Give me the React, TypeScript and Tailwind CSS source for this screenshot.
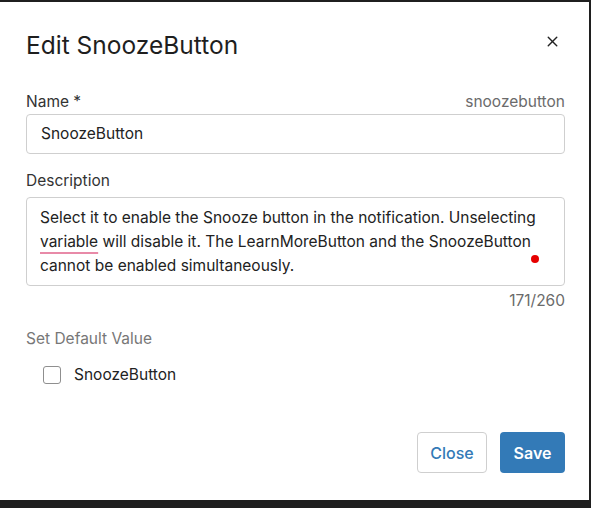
import { X } from "lucide-react";

const font = { fontFamily: "Inter, 'Noto Sans', sans-serif" };

export default function App() {
  return (
    <div className="h-[508px] w-[591px] overflow-hidden bg-[#1f1f1f] pt-[2px]" style={font}>
      <div className="flex h-[498px] w-[589px] flex-col bg-white pl-[26px] pr-[24px] text-[#222]">
        <div className="flex items-start justify-between pt-[28px]">
          <h1 className="text-[24.5px] leading-[30px] text-[#1e1e1e]">Edit SnoozeButton</h1>
          <button type="button" className="mr-[4px] mt-[3px] text-[#222]">
            <X size={17} strokeWidth={2} />
          </button>
        </div>

        <div className="mt-[32px] flex items-center justify-between text-[15.5px] leading-[20px]">
          <span className="text-[#333]">Name *</span>
          <span className="text-[#6b6b6b]">snoozebutton</span>
        </div>
        <div className="mt-[2px] flex h-[40px] items-center rounded-[4px] border border-[#cfcfcf] px-[14px] text-[15.5px] text-[#222]">
          SnoozeButton
        </div>

        <div className="mt-[17px] text-[15.5px] leading-[20px] text-[#333]">Description</div>
        <div className="relative mt-[6px] h-[89px] rounded-[4px] border border-[#cfcfcf] px-[13px] pt-[8px] text-[15.5px] leading-[24px] text-[#222]">
          Select it to enable the Snooze button in the notification. Unselecting
          <br />
          <span className="underline decoration-[#e88aa8] decoration-2 underline-offset-[5px]">variable</span> will disable it. The
          LearnMoreButton and the SnoozeButton
          <br />
          cannot be enabled simultaneously.
          <span className="absolute left-[504px] top-[57px] h-[8px] w-[8px] rounded-full bg-[#e60000]" />
        </div>
        <div className="mt-[5px] text-right text-[15.5px] leading-[20px] text-[#6b6b6b]">171/260</div>

        <div className="mt-[18px] text-[15.5px] leading-[20px] text-[#777]">Set Default Value</div>
        <label className="ml-[17px] mt-[16px] flex h-[20px] items-center gap-[13px] text-[15.5px] text-[#222]">
          <span className="h-[18px] w-[18px] rounded-[3px] border border-[#8f8f8f] bg-white" />
          SnoozeButton
        </label>

        <div className="mb-[27px] mt-auto flex justify-end gap-[13px]">
          <button
            type="button"
            className="h-[41px] w-[70px] rounded-[4px] border border-[#cfcfcf] bg-white text-[16px] font-medium text-[#337ab7]"
          >
            Close
          </button>
          <button
            type="button"
            className="h-[41px] w-[65px] rounded-[4px] bg-[#337ab7] text-[16px] font-semibold text-white"
          >
            Save
          </button>
        </div>
      </div>
    </div>
  );
}
